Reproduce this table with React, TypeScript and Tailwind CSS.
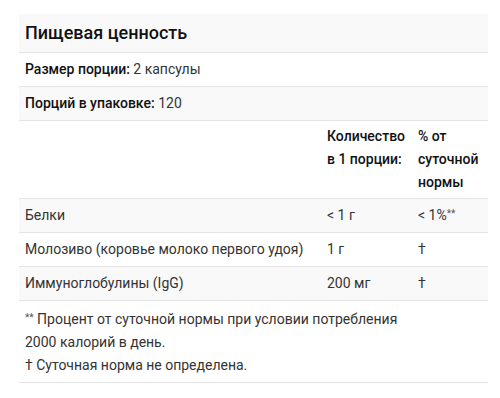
import React from 'react';

const rows = [
    { name: 'Белки', amount: '< 1 г', dv: '< 1%', mark: true },
    { name: 'Молозиво (коровье молоко первого удоя)', amount: '1 г', dv: '†', mark: false },
    { name: 'Иммуноглобулины (IgG)', amount: '200 мг', dv: '†', mark: false },
];

const Stars = () => <span className="text-[10px] align-[3px] text-[#555]">**</span>;

export default function App() {
    return (
        <div className="bg-white w-[500px] h-[398px] pt-[14px] pl-[19px] font-['Roboto',sans-serif] text-[#333] text-[14px]">
            <table className="w-[469px] table-fixed border-collapse">
                <colgroup>
                    <col className="w-[302px]" />
                    <col className="w-[91px]" />
                    <col />
                </colgroup>
                <tbody>
                    {/* Title */}
                    <tr className="bg-[#f9f9f9] border-b border-[#e5e5e5]">
                        <td colSpan={3} className="px-[6px] h-[38px] text-[18px] font-medium text-[#111]">
                            Пищевая ценность
                        </td>
                    </tr>
                    <tr className="border-b border-[#e5e5e5]">
                        <td colSpan={3} className="px-[6px] h-[34px]">
                            <span className="font-medium text-[#111]">Размер порции:</span> 2 капсулы
                        </td>
                    </tr>
                    <tr className="bg-[#f9f9f9] border-b border-[#e5e5e5]">
                        <td colSpan={3} className="px-[6px] h-[34px]">
                            <span className="font-medium text-[#111]">Порций в упаковке:</span> 120
                        </td>
                    </tr>
                    {/* Header */}
                    <tr className="border-b border-[#e5e5e5]">
                        <td></td>
                        <td className="px-[6px] py-[4px] align-top font-medium text-[#111] leading-[23px]">
                            Количество в 1 порции:
                        </td>
                        <td className="px-[6px] py-[4px] align-top font-medium text-[#111] leading-[23px]">
                            % от суточной нормы
                        </td>
                    </tr>
                    {rows.map((r, i) => (
                        <tr key={r.name} className={`border-b border-[#e5e5e5] ${i % 2 === 0 ? 'bg-[#f9f9f9]' : ''}`}>
                            <td className="px-[6px] h-[34px]">{r.name}</td>
                            <td className="px-[6px]">{r.amount}</td>
                            <td className="px-[6px]">
                                {r.dv}
                                {r.mark && <Stars />}
                            </td>
                        </tr>
                    ))}
                    {/* Footnotes */}
                    <tr className="border-b border-[#e5e5e5]">
                        <td colSpan={2} className="px-[6px] py-[5px] leading-[23px]">
                            <Stars /> Процент от суточной нормы при условии потребления 2000 калорий в день.
                            <br />† Суточная норма не определена.
                        </td>
                        <td></td>
                    </tr>
                </tbody>
            </table>
        </div>
    );
}
